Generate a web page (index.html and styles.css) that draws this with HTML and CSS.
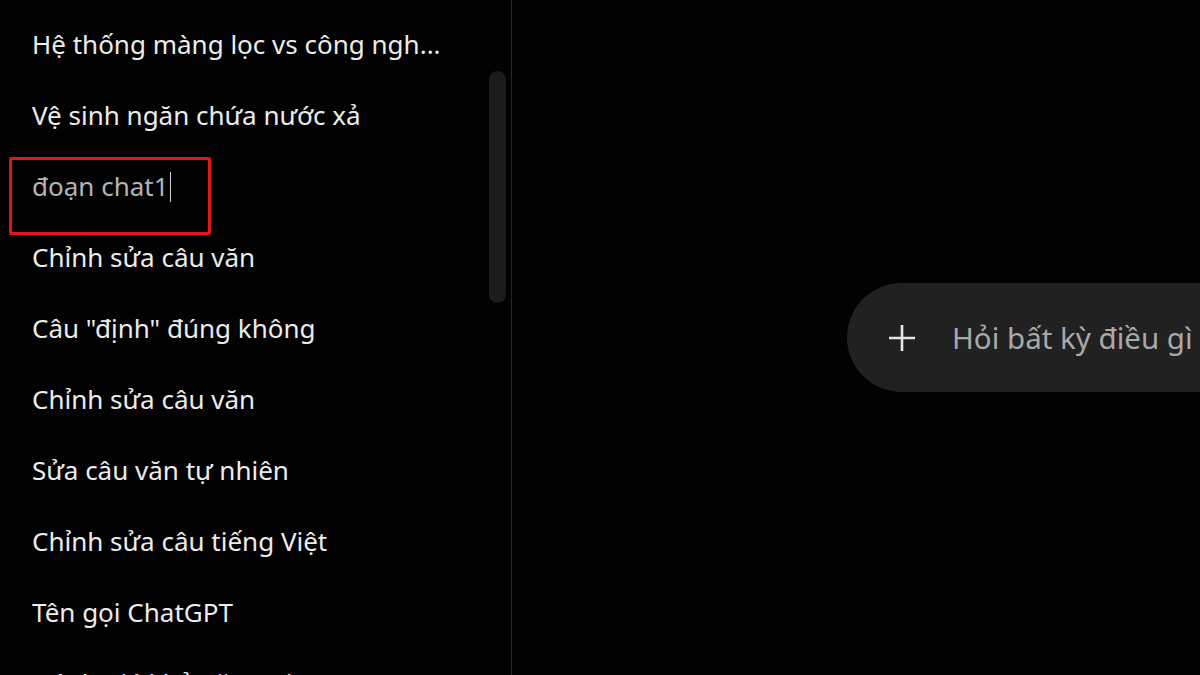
FILE: index.html
```html
<!DOCTYPE html>
<html lang="vi">
<head>
<meta charset="utf-8">
<link rel="stylesheet" href="styles.css">
</head>
<body>
<div class="app">
  <aside class="sidebar">
    <ul class="list">
      <li class="item">Hệ thống màng lọc vs công ngh...</li>
      <li class="item">Vệ sinh ngăn chứa nước xả</li>
      <li class="item editing"><span class="edit-text">đoạn chat1</span><span class="caret"></span><span class="highlight"></span></li>
      <li class="item">Chỉnh sửa câu văn</li>
      <li class="item">Câu "định" đúng không</li>
      <li class="item">Chỉnh sửa câu văn</li>
      <li class="item">Sửa câu văn tự nhiên</li>
      <li class="item">Chỉnh sửa câu tiếng Việt</li>
      <li class="item">Tên gọi ChatGPT</li>
      <li class="item">Đánh giá khả năng ChatGPT</li>
    </ul>
    <div class="track"><div class="thumb"></div></div>
  </aside>
  <main class="main">
    <div class="composer">
      <svg class="plus" width="30" height="30" viewBox="0 0 30 30"><path d="M15 2v26M2 15h26" stroke="#e6e6e6" stroke-width="2.6" fill="none"/></svg>
      <span class="placeholder">Hỏi bất kỳ điều gì</span>
    </div>
  </main>
</div>
</body>
</html>
```
FILE: styles.css
```css
html, body {
  margin: 0;
  padding: 0;
  background: #020202;
  width: 1200px;
  height: 675px;
  overflow: hidden;
}
.app {
  display: flex;
  height: 675px;
  font-family: "Noto Sans", "Open Sans", sans-serif;
}
.sidebar {
  width: 511px;
  flex: none;
  display: flex;
  border-right: 1px solid #262626;
  background: #020202;
  overflow: hidden;
}
.list {
  list-style: none;
  margin: 0;
  padding: 9px 0 0 32px;
  flex: 1;
}
.item {
  height: 71px;
  line-height: 71px;
  font-size: 26px;
  color: #ececec;
  white-space: nowrap;
  position: relative;
}
.editing .edit-text {
  color: #b4b4b4;
}
.caret {
  display: inline-block;
  width: 1.5px;
  height: 30px;
  background: #cfcfcf;
  vertical-align: middle;
  margin-left: 1px;
  margin-top: -4px;
}
.highlight {
  position: absolute;
  left: -23px;
  top: 6px;
  width: 196px;
  height: 72px;
  border: 3px solid #e0161c;
  border-radius: 2px;
}
.track {
  width: 17px;
  margin-right: 5px;
  flex: none;
}
.thumb {
  margin-top: 71px;
  height: 232px;
  background: #1c1c1c;
  border-radius: 9px;
}
.main {
  flex: 1;
  padding: 283px 0 0 335px;
  overflow: hidden;
}
.composer {
  width: 700px;
  height: 109px;
  background: #212121;
  border-radius: 55px;
  display: flex;
  align-items: center;
  padding-left: 40px;
  box-sizing: border-box;
}
.plus {
  flex: none;
}
.placeholder {
  margin-left: 35px;
  font-size: 29.5px;
  color: #a9a9a9;
  white-space: nowrap;
}
```
